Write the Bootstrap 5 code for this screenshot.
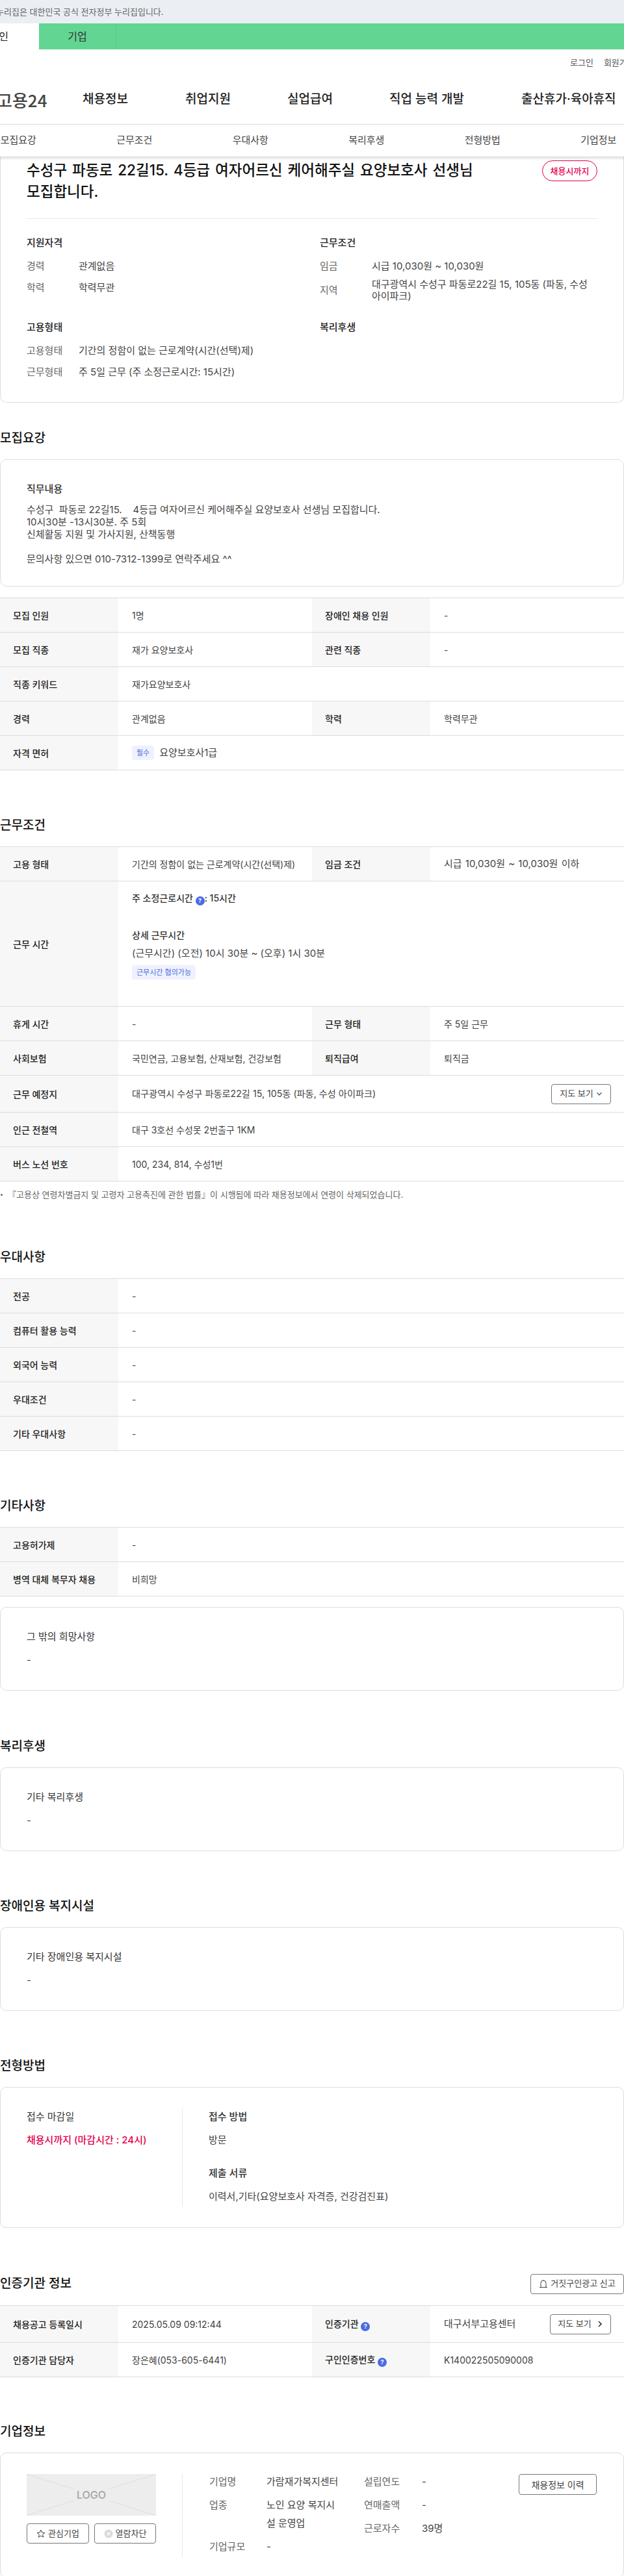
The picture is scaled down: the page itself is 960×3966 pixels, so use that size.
<!DOCTYPE html>
<html lang="ko">
<head>
	<meta charset="utf-8">
	<meta name="viewport" content="width=device-width, initial-scale=1">
	<title>고용24 채용정보 상세</title>

	<link href="https://cdn.jsdelivr.net/npm/bootstrap@5.3.3/dist/css/bootstrap.min.css" rel="stylesheet">

	<style>
		body {
			font-family: Inter, "Noto Sans CJK KR", sans-serif;
			font-size: 14px;
			color: #444;
			background: #fff;
			overflow-x: hidden;
			width: 960px;
		}

		/* top bars */
		.gov-bar {
			height: 36px;
			line-height: 36px;
			background: #ebeff4;
			color: #666;
			font-size: 13px;
			white-space: nowrap;
		}
		.gov-bar span { margin-left: -6px; }
		.user-bar {
			height: 40px;
			background: #62d592;
			font-size: 16px;
			color: #333;
		}
		.user-tab { height: 40px; line-height: 40px; text-align: center; }
		.user-tab-on { width: 60px; background: #fff; color: #222; justify-content: flex-end; display: flex; padding-right: 47px; white-space: nowrap; }
		.user-tab-off { width: 119px; border-right: 1px solid #57c986; }
		.util-links {
			height: 40px;
			line-height: 40px;
			font-size: 13px;
			color: #555;
			white-space: nowrap;
			padding-left: 877px;
		}
		.util-links span + span { margin-left: 16px; }
		.gnb {
			height: 76px;
			border-bottom: 1px solid #e6e6e6;
			white-space: nowrap;
			position: relative;
		}
		.gnb-logo { font-size: 26px; font-weight: 500; color: #444; margin-left: -5px; width: 132px; font-family: "Noto Sans CJK KR", sans-serif; }
		.gnb-item { font-size: 19px; font-weight: 500; color: #222; }
		.page-tabs {
			height: 49px;
			position: relative;
			z-index: 2;
			background: #fff;
			box-shadow: 0 2px 5px rgba(0, 0, 0, .18);
			margin-left: -61px;
			width: 1071px;
		}
		.page-tab { flex: 1 1 0; text-align: center; font-size: 15px; color: #444; }

		/* sections */
		.sec-block { margin-top: 72px; }
		.sec-title {
			font-size: 19px;
			font-weight: 500;
			line-height: 28px;
			color: #111;
			margin: 0 0 18px;
		}
		.box {
			border: 1px solid #ddd;
			border-radius: 10px;
			background: #fff;
			font-size: 15px;
		}
		.box-pad { padding: 35px 40px 36px; }
		.box-head { font-size: 15px; line-height: 20px; color: #333; margin: 0; }
		.head-strong { font-weight: 500; }
		.box-text { line-height: 20px; margin: 16px 0 0; color: #444; }

		/* summary card */
		.sum-card {
			border-top: 0;
			border-radius: 0 0 10px 10px;
			height: 379px;
			padding: 4px 40px 0;
		}
		.job-title { font-size: 22.5px; font-weight: 500; line-height: 33px; color: #111; margin: 0; width: 720px; word-break: keep-all; word-spacing: 2px; }
		.state-pill {
			width: 85px;
			height: 32px;
			line-height: 30px;
			margin-top: 2px;
			border: 1px solid #e6004e;
			border-radius: 16px;
			color: #e6004e;
			font-size: 13px;
			font-weight: 500;
			text-align: center;
		}
		.sum-rule { margin: 25px 0 26px; border: 0; border-top: 1px solid #e8e8e8; opacity: 1; }
		.sum-grid { display: grid; grid-template-columns: 451px 427px; grid-template-rows: 130px 1fr; word-break: keep-all; }
		.sum-head { font-size: 15px; font-weight: 500; line-height: 22px; color: #222; margin-bottom: 8.5px; }
		.sum-row { display: flex; align-items: center; min-height: 33px; line-height: 18.5px; }
		.sum-row.wide { padding: 2px 0; }
		.sum-key { flex: 0 0 80px; color: #666; }
		.sum-val { color: #444; }

		/* detail tables */
		.info-tbl { width: 960px; table-layout: fixed; border-collapse: collapse; border-top: 1px solid #ddd; margin: 0 0 -1px; }
		.info-tbl th, .info-tbl td { border-bottom: 1px solid #ddd; height: 53px; padding: 0 0 0 20px; vertical-align: middle; }
		.info-tbl th { width: 182px; background: #f7f7f7; font-weight: 500; color: #222; }
		.info-tbl td { padding-left: 21px; color: #444; }
		.tbl-hi th, .tbl-hi td { height: 57px; }
		.td-lg { font-size: 15px; }
		.td-wage { font-size: 15px; word-spacing: 1px; }
		.td-addr { font-size: 14.2px; }
		.tag-soft {
			display: inline-block;
			height: 22px;
			line-height: 22px;
			padding: 0 7px;
			background: #eff1fd;
			color: #4a6be5;
			font-size: 11px;
			border-radius: 4px;
			white-space: nowrap;
		}
		.help-dot {
			display: inline-block;
			width: 14px;
			height: 14px;
			line-height: 14px;
			border-radius: 50%;
			background: #4a6be5;
			color: #fff;
			font-size: 9px;
			font-weight: 700;
			text-align: center;
			vertical-align: -2px;
		}
		.line-btn {
			display: inline-flex;
			align-items: center;
			justify-content: center;
			height: 31px;
			padding: 0;
			border: 1px solid #777;
			border-radius: 4px;
			background: #fff;
			color: #444;
			font-size: 13px;
			white-space: nowrap;
		}
		.note-line { margin: 12px 0 0; font-size: 13px; color: #666; line-height: 18px; padding-left: 12px; position: relative; }
		.note-line::before { content: ""; position: absolute; left: 1px; top: 8px; width: 3px; height: 3px; border-radius: 50%; background: #666; }

		/* apply box */
		.apply-box { padding: 32px 40px 32px; height: 217.2px; }
		.apply-left { width: 240px; height: 151px; border-right: 1px solid #e8e8e8; }
		.apply-right { padding-left: 40px; }
		.apply-head { line-height: 20px; color: #333; margin: 3px 0 0; }
		.apply-val { line-height: 20px; margin: 16px 0 0; color: #444; }
		.text-deadline { color: #e6004e; font-weight: 500; }

		/* company box */
		.corp-box { padding: 32px 40px 0; height: 193px; }
		.corp-left { width: 240px; height: 128px; border-right: 1px solid #e8e8e8; flex: 0 0 240px; }
		.corp-logo { display: block; width: 199px; height: 64px; }
		.corp-btns { width: 199px; margin-top: 12px; }
		.corp-info { padding-left: 41px; flex: 0 0 518px; color: #444; line-height: 28px; margin-top: -2px; }
		.corp-col { width: 238px; }
		.corp-col-b { flex: 1 1 auto; }
		.corp-row { display: flex; margin-bottom: 8px; }
		.corp-key { color: #666; flex: 0 0 88px; }
		.corp-key-b { flex: 0 0 89px; }
		.corp-val { width: 112px; }
	</style>
</head>
<body>

	<div class="gov-bar"><span>누리집은 대한민국 공식 전자정부 누리집입니다.</span></div>

	<div class="user-bar d-flex">
		<div class="user-tab user-tab-on"><span>개인</span></div>
		<div class="user-tab user-tab-off">기업</div>
	</div>

	<div class="util-links"><span>로그인</span><span>회원가입</span></div>

	<div class="gnb d-flex align-items-center">
		<div class="gnb-logo">고용24</div>
		<div class="gnb-item" style="width:158px">채용정보</div>
		<div class="gnb-item" style="width:157px">취업지원</div>
		<div class="gnb-item" style="width:157px">실업급여</div>
		<div class="gnb-item" style="width:203px">직업 능력 개발</div>
		<div class="gnb-item">출산휴가·육아휴직</div>
	</div>

	<div class="page-tabs d-flex align-items-center">
		<div class="page-tab">모집요강</div>
		<div class="page-tab">근무조건</div>
		<div class="page-tab">우대사항</div>
		<div class="page-tab">복리후생</div>
		<div class="page-tab">전형방법</div>
		<div class="page-tab">기업정보</div>
	</div>

	<main>
		<div class="box sum-card">
			<div class="d-flex justify-content-between">
				<h1 class="job-title">수성구 파동로 22길15. 4등급 여자어르신 케어해주실 요양보호사 선생님 모집합니다.</h1>
				<div class="state-pill">채용시까지</div>
			</div>
			<hr class="sum-rule">
			<div class="sum-grid">
				<div>
					<div class="sum-head">지원자격</div>
					<div class="sum-row"><div class="sum-key">경력</div><div class="sum-val">관계없음</div></div>
					<div class="sum-row"><div class="sum-key">학력</div><div class="sum-val">학력무관</div></div>
				</div>
				<div>
					<div class="sum-head">근무조건</div>
					<div class="sum-row"><div class="sum-key">임금</div><div class="sum-val">시급 10,030원 ~ 10,030원</div></div>
					<div class="sum-row wide"><div class="sum-key">지역</div><div class="sum-val">대구광역시 수성구 파동로22길 15, 105동 (파동, 수성 아이파크)</div></div>
				</div>
				<div>
					<div class="sum-head">고용형태</div>
					<div class="sum-row"><div class="sum-key">고용형태</div><div class="sum-val">기간의 정함이 없는 근로계약(시간(선택)제)</div></div>
					<div class="sum-row"><div class="sum-key">근무형태</div><div class="sum-val">주 5일 근무 (주 소정근로시간: 15시간)</div></div>
				</div>
				<div>
					<div class="sum-head">복리후생</div>
				</div>
			</div>
		</div>

		<section style="margin-top:41px">
			<h2 class="sec-title">모집요강</h2>
			<div class="box" style="padding:35px 40px 32px">
				<p class="box-head head-strong">직무내용</p>
				<p class="mb-0" style="margin-top:12px;line-height:19px">수성구&nbsp; 파동로 22길15.&nbsp; &nbsp; 4등급 여자어르신 케어해주실 요양보호사 선생님 모집합니다.<br>10시30분 -13시30분. 주 5회<br>신체활동 지원 및 가사지원, 산책동행<br><br>문의사항 있으면 010-7312-1399로 연락주세요 ^^</p>
			</div>
			<table class="info-tbl" style="margin-top:17px">
				<tr><th>모집 인원</th><td>1명</td><th>장애인 채용 인원</th><td>-</td></tr>
				<tr><th>모집 직종</th><td>재가 요양보호사</td><th>관련 직종</th><td>-</td></tr>
				<tr><th>직종 키워드</th><td colspan="3">재가요양보호사</td></tr>
				<tr><th>경력</th><td>관계없음</td><th>학력</th><td>학력무관</td></tr>
				<tr><th>자격 면허</th><td colspan="3"><span class="tag-soft me-2">필수</span><span class="td-lg align-middle">요양보호사1급</span></td></tr>
			</table>
		</section>

		<section class="sec-block">
			<h2 class="sec-title">근무조건</h2>
			<table class="info-tbl">
				<tr><th>고용 형태</th><td>기간의 정함이 없는 근로계약(시간(선택)제)</td><th>임금 조건</th><td class="td-wage">시급 10,030원 ~ 10,030원 이하</td></tr>
				<tr>
					<th>근무 시간</th>
					<td colspan="3" style="height:193px;vertical-align:top;padding-top:16px">
						<div style="font-weight:500;line-height:20px;color:#333">주 소정근로시간 <span class="help-dot">?</span>: 15시간</div>
						<div style="font-weight:500;line-height:20px;margin-top:36px;color:#333">상세 근무시간</div>
						<div class="td-lg" style="line-height:20px;margin-top:8px">(근무시간) (오전) 10시 30분 ~ (오후) 1시 30분</div>
						<div style="margin-top:7px"><span class="tag-soft">근무시간 협의가능</span></div>
					</td>
				</tr>
				<tr><th>휴게 시간</th><td>-</td><th>근무 형태</th><td>주 5일 근무</td></tr>
				<tr><th>사회보험</th><td>국민연금, 고용보험, 산재보험, 건강보험</td><th>퇴직급여</th><td>퇴직금</td></tr>
				<tr class="tbl-hi">
					<th>근무 예정지</th>
					<td colspan="3" style="padding-right:20px">
						<div class="d-flex justify-content-between align-items-center">
							<span class="td-addr">대구광역시 수성구 파동로22길 15, 105동 (파동, 수성 아이파크)</span>
							<button type="button" class="line-btn" style="width:92px">지도 보기
								<svg class="ms-1" width="10" height="10" viewBox="0 0 10 10" fill="none" stroke="#444" stroke-width="1.2"><path d="M1.5 3.2 5 6.8 8.5 3.2"/></svg>
							</button>
						</div>
					</td>
				</tr>
				<tr><th>인근 전철역</th><td colspan="3">대구 3호선 수성못 2번출구 1KM</td></tr>
				<tr><th>버스 노선 번호</th><td colspan="3">100, 234, 814, 수성1번</td></tr>
			</table>
			<p class="note-line">『고용상 연령차별금지 및 고령자 고용촉진에 관한 법률』이 시행됨에 따라 채용정보에서 연령이 삭제되었습니다.</p>
		</section>

		<section style="margin-top:74px">
			<h2 class="sec-title">우대사항</h2>
			<table class="info-tbl">
				<tr><th>전공</th><td>-</td></tr>
				<tr><th>컴퓨터 활용 능력</th><td>-</td></tr>
				<tr><th>외국어 능력</th><td>-</td></tr>
				<tr><th>우대조건</th><td>-</td></tr>
				<tr><th>기타 우대사항</th><td>-</td></tr>
			</table>
		</section>

		<section class="sec-block">
			<h2 class="sec-title">기타사항</h2>
			<table class="info-tbl">
				<tr><th>고용허가제</th><td>-</td></tr>
				<tr><th>병역 대체 복무자 채용</th><td>비희망</td></tr>
			</table>
			<div class="box box-pad" style="margin-top:17px">
				<p class="box-head">그 밖의 희망사항</p>
				<p class="box-text">-</p>
			</div>
		</section>

		<section class="sec-block">
			<h2 class="sec-title">복리후생</h2>
			<div class="box box-pad">
				<p class="box-head">기타 복리후생</p>
				<p class="box-text">-</p>
			</div>
		</section>

		<section style="margin-top:71px">
			<h2 class="sec-title">장애인용 복지시설</h2>
			<div class="box box-pad">
				<p class="box-head">기타 장애인용 복지시설</p>
				<p class="box-text">-</p>
			</div>
		</section>

		<section style="margin-top:71px">
			<h2 class="sec-title">전형방법</h2>
			<div class="box apply-box d-flex">
				<div class="apply-left">
					<p class="apply-head">접수 마감일</p>
					<p class="apply-val text-deadline">채용시까지 (마감시간 : 24시)</p>
				</div>
				<div class="apply-right">
					<p class="apply-head head-strong">접수 방법</p>
					<p class="apply-val">방문</p>
					<p class="apply-head head-strong" style="margin-top:31px">제출 서류</p>
					<p class="apply-val">이력서,기타(요양보호사 자격증, 건강검진표)</p>
				</div>
			</div>
		</section>

		<section style="margin-top:70px">
			<div class="d-flex justify-content-between align-items-center" style="margin-bottom:17px;height:32px">
				<h2 class="sec-title mb-0">인증기관 정보</h2>
				<button type="button" class="line-btn" style="width:144px">
					<svg class="me-1" width="14" height="14" viewBox="0 0 14 14" fill="none" stroke="#444" stroke-width="1"><path d="M1 12.500h12M3 12.500V6a4 4 0 0 1 8 0v6.500"/><path d="M7 2V1"/></svg>
					거짓구인광고 신고
				</button>
			</div>
			<table class="info-tbl">
				<tr class="tbl-hi">
					<th>채용공고 등록일시</th>
					<td>2025.05.09 09:12:44</td>
					<th>인증기관 <span class="help-dot">?</span></th>
					<td style="padding-right:20px">
						<div class="d-flex justify-content-between align-items-center">
							<span class="td-lg">대구서부고용센터</span>
							<button type="button" class="line-btn" style="width:94px">지도 보기
								<svg class="ms-2" width="10" height="12" viewBox="0 0 10 12" fill="none" stroke="#333" stroke-width="1.600"><path d="M3 2l4 4-4 4"/></svg>
							</button>
						</div>
					</td>
				</tr>
				<tr><th>인증기관 담당자</th><td>장은혜(053-605-6441)</td><th>구인인증번호 <span class="help-dot">?</span></th><td>K140022505090008</td></tr>
			</table>
		</section>

		<section style="margin-top:71px">
			<h2 class="sec-title">기업정보</h2>
			<div class="box corp-box d-flex">
				<div class="corp-left">
					<svg class="corp-logo" viewBox="0 0 199 64">
						<rect width="199" height="64" fill="#ededed"/>
						<path d="M0 0 72 23M199 0 127 23M0 64 72 41M199 64 127 41" stroke="#ddd" stroke-width="1"/>
						<text x="99.500" y="38" text-anchor="middle" font-family="Inter, sans-serif" font-size="16" font-weight="500" fill="#a5a5a5">LOGO</text>
					</svg>
					<div class="corp-btns d-flex justify-content-between">
						<button type="button" class="line-btn" style="width:96px">
							<svg class="me-1" width="14" height="14" viewBox="0 0 14 14" fill="none" stroke="#444" stroke-width="1"><path d="M7 1.200l1.700 3.800 4.100.4-3.100 2.700.9 4.100L7 10.100l-3.600 2.100.9-4.100-3.100-2.700 4.100-.4z"/></svg>
							관심기업
						</button>
						<button type="button" class="line-btn" style="width:95px">
							<svg class="me-1" width="14" height="14" viewBox="0 0 14 14"><circle cx="7" cy="7" r="6.500" fill="#d9d9d9"/><path d="M4.500 4.500l5 5M9.500 4.500l-5 5" stroke="#fff" stroke-width="1.200"/></svg>
							열람차단
						</button>
					</div>
				</div>
				<div class="corp-info d-flex">
					<div class="corp-col">
						<div class="corp-row"><div class="corp-key">기업명</div><div class="corp-val">가람재가복지센터</div></div>
						<div class="corp-row"><div class="corp-key">업종</div><div class="corp-val">노인 요양 복지시설 운영업</div></div>
						<div class="corp-row"><div class="corp-key">기업규모</div><div class="corp-val">-</div></div>
					</div>
					<div class="corp-col-b">
						<div class="corp-row"><div class="corp-key corp-key-b">설립연도</div><div>-</div></div>
						<div class="corp-row"><div class="corp-key corp-key-b">연매출액</div><div>-</div></div>
						<div class="corp-row"><div class="corp-key corp-key-b">근로자수</div><div>39명</div></div>
					</div>
				</div>
				<div>
					<button type="button" class="line-btn" style="width:120px;height:32px;margin-left:-1px;font-size:14px">채용정보 이력</button>
				</div>
			</div>
		</section>
	</main>

</body>
</html>
